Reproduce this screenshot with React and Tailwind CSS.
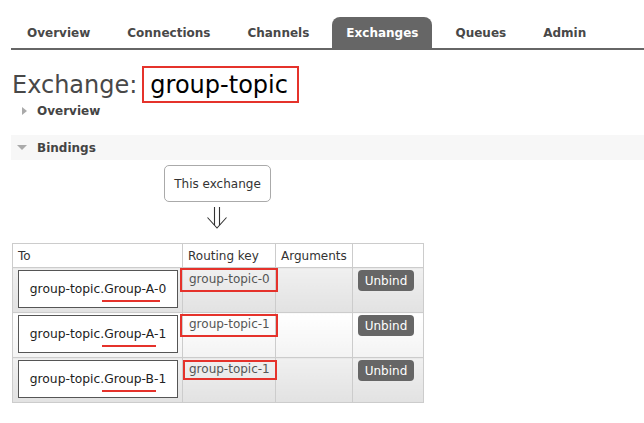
import React from 'react';

const tabs = ['Overview', 'Connections', 'Channels', 'Exchanges', 'Queues', 'Admin'];

const rows = [
  { pre: 'Group-A-', post: '0', key: 'group-topic-0', line: 'right-[-2px]', box: 'left-[-3px] top-0 w-[98px] h-[24px]', odd: true },
  { pre: 'Group-A-', post: '1', key: 'group-topic-1', line: 'right-[2px]', box: 'left-[-3px] top-[1px] w-[98px] h-[23px]', odd: false },
  { pre: 'Group-B-', post: '1', key: 'group-topic-1', line: 'right-[2px]', box: 'left-0 top-[2px] w-[94px] h-[20px]', odd: true },
];

const DownArrow = () => (
  <svg width="22" height="22" viewBox="0 0 22 22" fill="none" stroke="#333" strokeWidth="1.1">
    <path d="M8.5 0 V18" />
    <path d="M13.5 0 V18" />
    <path d="M1.5 10.5 L11 21 L20.5 10.5" />
  </svg>
);

export default function App() {
  const cellBg = (odd) =>
    odd ? 'bg-linear-to-b from-[#f0f0f0] to-[#e2e2e2]' : 'bg-linear-to-b from-[#ffffff] to-[#f3f3f3]';

  return (
    <div className="w-[644px] h-[423px] overflow-hidden bg-white font-['DejaVu_Sans',Verdana,sans-serif] text-[#333]">
      {/* Top tabs */}
      <div className="pt-[17px] ml-[11px] border-b-2 border-[#666]">
        <div className="flex gap-[9px] pl-[2px]">
          {tabs.map((t) => (
            <div
              key={t}
              className={
                t === 'Exchanges'
                  ? 'h-[31px] px-[14px] flex items-center text-[12px] font-bold text-white bg-[#666] rounded-t-[8px]'
                  : 'h-[31px] px-[14px] flex items-center text-[12px] font-bold text-[#484848]'
              }
            >
              {t}
            </div>
          ))}
        </div>
      </div>

      {/* Title */}
      <div className="mt-[16px] pl-[12px] flex items-center text-[24px] leading-none">
        <span className="text-[#484848]">Exchange:</span>
        <span className="ml-[5px] h-[37px] border-2 border-[#e5322b] pl-[6px] pr-[9px] flex items-center text-black">
          group-topic
        </span>
      </div>

      {/* Overview toggle */}
      <div className="h-[15px] flex items-center ml-[22px] gap-[10px]">
        <span className="w-0 h-0 border-y-[4.5px] border-y-transparent border-l-[5px] border-l-[#aaa]" />
        <span className="text-[12px] font-bold text-[#444]">Overview</span>
      </div>

      {/* Bindings bar */}
      <div className="mt-[17px] ml-[11px] h-[25px] bg-[#f7f7f7] flex items-center pl-[6px] gap-[10px]">
        <span className="w-0 h-0 border-x-[5px] border-x-transparent border-t-[5px] border-t-[#aaa]" />
        <span className="text-[12px] font-bold text-[#444]">Bindings</span>
      </div>

      {/* This exchange */}
      <div className="mt-[5px] ml-[164px] w-[107px] h-[37px] border border-[#aaa] rounded-[5px] flex items-center justify-center text-[12px] text-[#333]">
        This exchange
      </div>
      <div className="mt-[5px] ml-[206px] w-[22px] h-[22px]">
        <DownArrow />
      </div>

      {/* Bindings table */}
      <table className="mt-[14px] ml-[12px] w-[411px] table-fixed border-collapse text-[12px]">
        <colgroup>
          <col className="w-[170px]" />
          <col className="w-[93px]" />
          <col className="w-[77px]" />
          <col className="w-[71px]" />
        </colgroup>
        <thead>
          <tr className="h-[24px]">
            <th className="border border-[#ccc] px-[5px] text-left font-normal text-[#333]">To</th>
            <th className="border border-[#ccc] px-[5px] text-left font-normal text-[#333]">Routing key</th>
            <th className="border border-[#ccc] px-[5px] text-left font-normal text-[#333]">Arguments</th>
            <th className="border border-[#ccc] px-[5px]"></th>
          </tr>
        </thead>
        <tbody>
          {rows.map((r, i) => (
            <tr key={i} className="h-[45px]">
              <td className={`border border-[#ccc] align-top pt-[2px] pl-[5px] ${cellBg(r.odd)}`}>
                <div className="w-[160px] h-[38px] border border-[#555] bg-white flex items-center justify-center text-[12.3px] text-[#222] leading-[16px]">
                  <span>
                    group-topic.
                    <span className="relative">
                      {r.pre}
                      <span className={`absolute left-[-2px] ${r.line} bottom-[-6px] h-[2px] bg-[#e5322b]`} />
                    </span>
                    {r.post}
                  </span>
                </div>
              </td>
              <td className={`relative border border-[#ccc] align-top pt-[3px] pl-[6px] leading-[16px] text-[#555] ${cellBg(r.odd)}`}>
                {r.key}
                <span className={`absolute ${r.box} border-2 border-[#e5322b]`} />
              </td>
              <td className={`border border-[#ccc] ${cellBg(r.odd)}`}></td>
              <td className={`border border-[#ccc] align-top pt-[2px] pl-[5px] ${cellBg(r.odd)}`}>
                <div className="w-[56px] h-[21px] rounded-[4px] bg-[#666] text-white flex items-center justify-center">
                  Unbind
                </div>
              </td>
            </tr>
          ))}
        </tbody>
      </table>
    </div>
  );
}
